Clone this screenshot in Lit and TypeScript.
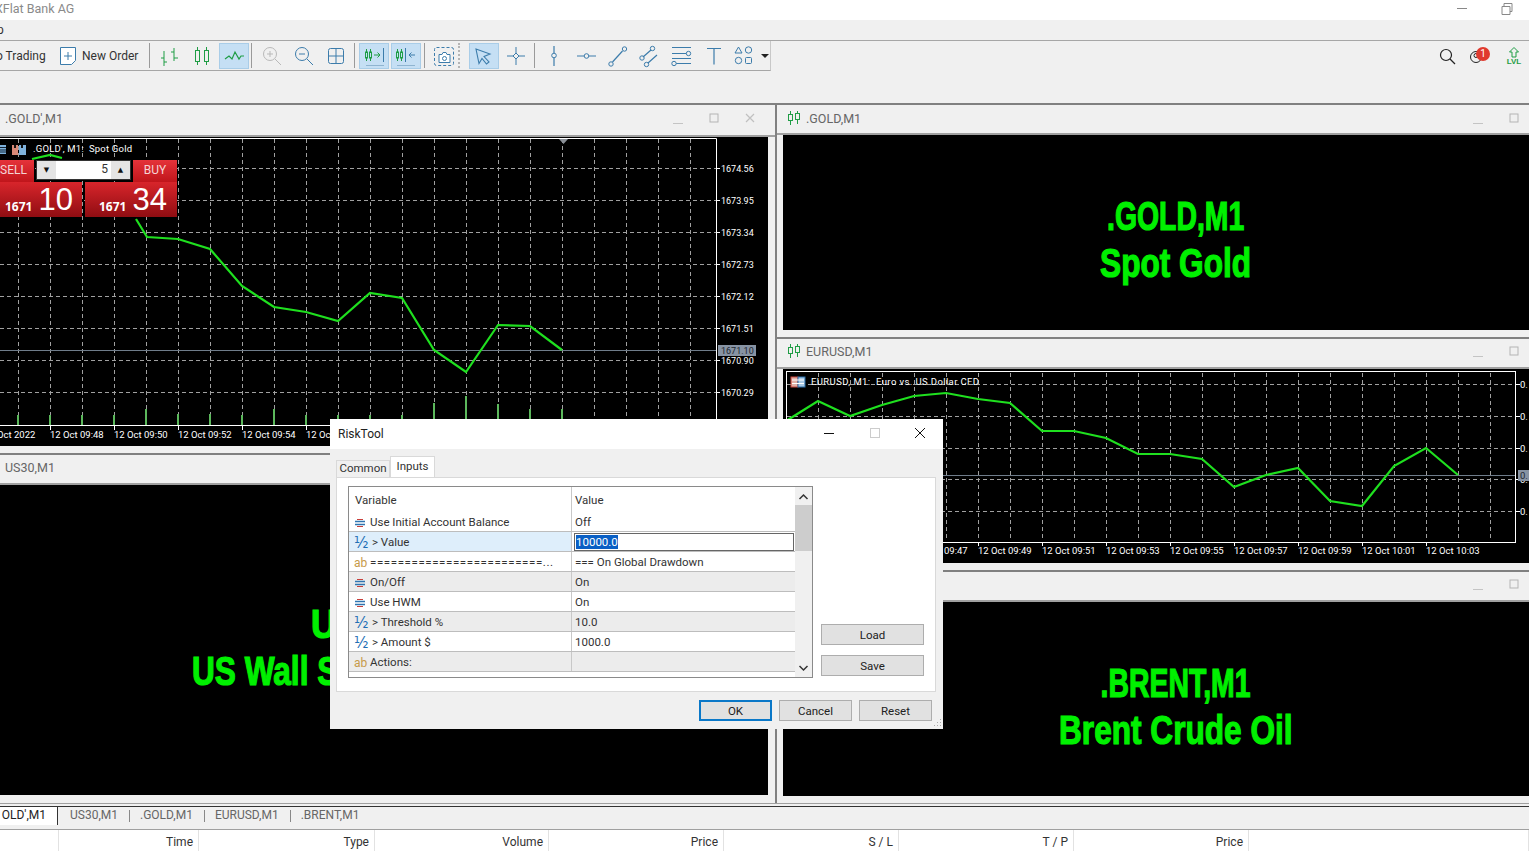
import { LitElement, html, css, svg } from 'lit'
import { customElement } from 'lit/decorators.js'

const range = (from: number, step: number, to: number) => {
  const out: number[] = []
  for (let v = from; v <= to; v += step) out.push(v)
  return out
}
const pts = (list: number[][]) => list.map((p) => p.join(',')).join(' ')

// toolbar glyphs, all on a 30x26 box
const G = '#1f9d45'
const B = '#3c7cab'
const icons: Record<string, unknown> = {
  bars: svg`<path d="M9 8v15M6 15h3M9 19h3M19 5v13M16 9h3M19 15h4" stroke="${G}" fill="none"/>`,
  candles: svg`<path d="M10.5 4v3M10.5 18v4M19.5 4v3M19.5 18v4" stroke="${G}"/><rect x="8.5" y="7.5" width="4" height="11" fill="none" stroke="${G}"/><rect x="17.5" y="7.5" width="4" height="11" fill="none" stroke="${G}"/>`,
  line: svg`<path d="M6 16l4-3 3 3 3-7 4 7 2-3h3" stroke="${G}" fill="none" stroke-width="1.2"/>`,
  zoomin: svg`<circle cx="13" cy="11" r="6.5" fill="none" stroke="#b9b9b9"/><path d="M10 11h6M13 8v6M18 16l6 6" stroke="#b9b9b9" fill="none"/>`,
  zoomout: svg`<circle cx="13" cy="11" r="6.5" fill="none" stroke="${B}"/><path d="M10 11h6M18 16l6 6" stroke="${B}" fill="none"/>`,
  tile: svg`<rect x="7.5" y="5.5" width="15" height="15" rx="2" fill="none" stroke="${B}"/><path d="M15 5.5v15M7.5 13h15" stroke="${B}"/>`,
  shift: svg`<path d="M7.5 6v12M11.5 6v12" stroke="${G}"/><rect x="6.5" y="9" width="2" height="6" fill="#c5dff4" stroke="${G}"/><rect x="10.5" y="9" width="2" height="6" fill="#c5dff4" stroke="${G}"/><path d="M15 12h6M18.500 9.500L21 12l-2.500 2.500" stroke="${G}" fill="none"/><path d="M24.500 5v14" stroke="${B}"/><path d="M7 22.500h18" stroke="#8fb4d0"/>`,
  auto: svg`<path d="M6.500 6v12M10.500 6v12" stroke="${G}"/><rect x="5.500" y="9" width="2" height="6" fill="#c5dff4" stroke="${G}"/><rect x="9.500" y="9" width="2" height="6" fill="#c5dff4" stroke="${G}"/><path d="M14.500 5v14" stroke="${B}"/><path d="M24 12h-6M20.500 9.500L18 12l2.500 2.500" stroke="${B}" fill="none"/><path d="M6 22.500h18" stroke="#8fb4d0"/>`,
  camera: svg`<rect x="5.5" y="4.5" width="19" height="18" rx="2" fill="none" stroke="${B}" stroke-dasharray="3 2"/><path d="M10 11.5h3l1-2h3l1 2h3v8H10z" fill="#fff" stroke="${B}"/><circle cx="15.5" cy="15.5" r="2" fill="none" stroke="${B}"/>`,
  cursor: svg`<path d="M7 6l14 5-6 2.5 5 5.5-2.500 2-4.500-5.500-3 5z" fill="none" stroke="${B}" stroke-width="1.1"/>`,
  cross: svg`<path d="M15 4v18M6 13h18" stroke="${B}"/><path d="M15 10l3 3-3 3-3-3z" fill="#f0f0f0" stroke="${B}"/>`,
  vline: svg`<path d="M15 3v7M15 15v8" stroke="${B}" stroke-width="1.2"/><circle cx="15" cy="12.5" r="2.3" fill="none" stroke="${B}"/>`,
  hline: svg`<path d="M6 13h7M18 13h7" stroke="${B}" stroke-width="1.2"/><circle cx="15.5" cy="13" r="2.3" fill="none" stroke="${B}"/>`,
  trend: svg`<path d="M9.5 19l10-11" stroke="${B}" stroke-width="1.2"/><circle cx="8" cy="21" r="2.2" fill="none" stroke="${B}"/><circle cx="21.500" cy="6" r="2.200" fill="none" stroke="${B}"/>`,
  channel: svg`<path d="M8 14l8-7M13 20l9-8" stroke="${B}" stroke-width="1.2"/><circle cx="7" cy="15" r="2.200" fill="none" stroke="${B}"/><circle cx="17.500" cy="5.500" r="2.200" fill="none" stroke="${B}"/><circle cx="11.500" cy="21.500" r="2.200" fill="none" stroke="${B}"/>`,
  fibo: svg`<path d="M5 4.500h19M5 10.500h16M8 20.500h16M5 15.500h19" stroke="${B}" stroke-width="1.200"/><circle cx="21.500" cy="10.500" r="2.200" fill="#f0f0f0" stroke="${B}"/><circle cx="7" cy="20.500" r="2.200" fill="#f0f0f0" stroke="${B}"/>`,
  text: svg`<path d="M8 5.500h14M15 5.500v16" stroke="${B}" stroke-width="1.200"/>`,
  shapes: svg`<path d="M7.500 4l3.500 6H4z" fill="none" stroke="${B}"/><circle cx="17.500" cy="7" r="3.200" fill="none" stroke="${B}"/><circle cx="7.500" cy="17.500" r="3.200" fill="none" stroke="${B}"/><rect x="14.500" y="14.500" width="6" height="6" rx="1" fill="none" stroke="${B}"/>`,
}

type Tool = { icon: string; on?: boolean } | { sep: string }
const tools: Tool[] = [
  { icon: 'bars' }, { icon: 'candles' }, { icon: 'line', on: true }, { sep: 'a' },
  { icon: 'zoomin' }, { icon: 'zoomout' }, { icon: 'tile' }, { sep: 'b' },
  { icon: 'shift', on: true }, { icon: 'auto', on: true }, { sep: 'b' },
  { icon: 'camera' }, { sep: 'dots' },
  { icon: 'cursor', on: true }, { icon: 'cross' }, { sep: 'b' },
  { icon: 'vline' }, { icon: 'hline' }, { icon: 'trend' }, { icon: 'channel' },
  { icon: 'fibo' }, { icon: 'text' }, { icon: 'shapes' },
]

const enumIcon = html`<svg class="ico" viewBox="0 0 12 12"><path d="M1 4.500h10M1 7.500h10" stroke="#2f74b0" stroke-width="1.300" fill="none"/><path d="M3 2.500h6M3 9.500h6" stroke="#c8403c" stroke-width="1.200"/></svg>`
const numIcon = html`<span class="ico half">½</span>`
const strIcon = html`<span class="ico ab">ab</span>`

const rows = [
  { kind: enumIcon, name: 'Use Initial Account Balance', value: 'Off', cls: '' },
  { kind: numIcon, name: '> Value', value: '', cls: 'sel' },
  { kind: strIcon, name: '=========================...', value: '=== On Global Drawdown', cls: 'eq' },
  { kind: enumIcon, name: 'On/Off', value: 'On', cls: 'alt' },
  { kind: enumIcon, name: 'Use HWM', value: 'On', cls: '' },
  { kind: numIcon, name: '> Threshold %', value: '10.0', cls: 'alt' },
  { kind: numIcon, name: '> Amount $', value: '1000.0', cls: '' },
  { kind: strIcon, name: 'Actions:', value: '', cls: 'alt' },
]

const goldLine = [[136, 218], [147, 236], [178, 238], [210, 248], [242, 285], [274, 306], [306, 311], [338, 320], [370, 292], [402, 297], [434, 349], [466, 371], [498, 324], [530, 325], [562, 349]]
const goldPrices = ['1674.56', '1673.95', '1673.34', '1672.73', '1672.12', '1671.51', '1670.90', '1670.29']
const goldTimes: [number, string][] = [[-16, '12 Oct 2022'], [50, '12 Oct 09:48'], [114, '12 Oct 09:50'], [178, '12 Oct 09:52'], [242, '12 Oct 09:54'], [306, '12 Oct 09:56']]
const goldVols: [number, number][] = [[18, 10], [50, 10], [82, 10], [114, 10], [146, 16], [178, 11], [210, 11], [242, 10], [274, 16], [306, 10], [338, 10], [370, 10], [402, 10], [434, 22], [466, 29], [498, 21], [530, 16], [562, 16]]

const eurLine = [[786, 420], [818, 400], [850, 415], [882, 404], [914, 395], [946, 392], [978, 398], [1010, 402], [1042, 430], [1074, 430], [1106, 437], [1138, 453], [1170, 453], [1202, 458], [1234, 486], [1266, 474], [1298, 467], [1330, 500], [1362, 505], [1394, 465], [1426, 447], [1458, 474]]
const eurTimes: [number, string][] = [[914, '12 Oct 09:47'], [978, '12 Oct 09:49'], [1042, '12 Oct 09:51'], [1106, '12 Oct 09:53'], [1170, '12 Oct 09:55'], [1234, '12 Oct 09:57'], [1298, '12 Oct 09:59'], [1362, '12 Oct 10:01'], [1426, '12 Oct 10:03']]
const eurY = [383, 415, 447, 478, 510]

const goldChart = svg`
  <svg class="chart" viewBox="0 136 768 309" width="768" height="309">
    ${range(18, 32, 700).map((x) => svg`<path class="grid" d="M${x + 0.5} 138V424"/>`)}
    ${range(167, 32, 392).map((y) => svg`<path class="grid" d="M0 ${y + 0.5}H716"/>`)}
    <path class="bid" d="M0 349.500H716"/>
    <polyline class="price" points="${pts([[32, 158], [50, 154], [62, 157]])}"/>
    <polyline class="price" points="${pts(goldLine)}"/>
    ${goldVols.map(([x, h]) => svg`<path class="vol" d="M${x} 424V${424 - h}"/>`)}
    <path class="frame" d="M0 137.500H716.500V424.500H0"/>
    <path d="M559 138h9l-4.500 5z" fill="#8a8f96"/>
    ${goldPrices.map((p, i) => svg`<path class="frame" d="M716 ${167.5 + i * 32}h4"/><text class="lbl px" x="721" y="${170.5 + i * 32}">${p}</text>`)}
    ${goldTimes.map(([x, t]) => svg`<path class="frame" d="M${x + 0.5} 424v5"/><text class="lbl" x="${x}" y="437">${t}</text>`)}
    <rect x="718" y="344" width="38" height="11" fill="#8793a3"/>
    <text class="lbl px dark" x="721" y="353">1671.10</text>
    <path d="M0 144h6v9H0z" fill="#7fb2dc"/><path d="M0 146.500h6M0 149h6M0 151h6" stroke="#123"/>
    <path d="M12 144h6v10h-6z" fill="#d98a78"/><path d="M19 144h7v10h-7z" fill="#7fb2dc"/><path d="M14 144h2v3h-2zM21 144h2v3h-2z" fill="#111"/>
    <text class="lbl" x="33" y="151" textLength="99">.GOLD', M1:  Spot Gold</text>
  </svg>`

const eurChart = svg`
  <svg class="chart" viewBox="783 368 746 194" width="746" height="194">
    ${range(818, 32, 1490).map((x) => svg`<path class="grid" d="M${x + 0.5} 372V540"/>`)}
    ${eurY.map((y) => svg`<path class="grid" d="M787 ${y + 0.5}H1515"/>`)}
    <path class="bid" d="M787 474.500H1515"/>
    <polyline class="price" points="${pts(eurLine)}"/>
    <rect class="frame" x="786.500" y="370.500" width="729" height="171"/>
    ${eurY.map((y) => svg`<path class="frame" d="M1516 ${y + 0.5}h4"/><text class="lbl" x="1520" y="${y + 3.5}">0.</text>`)}
    ${eurTimes.map(([x, t]) => svg`<path class="frame" d="M${x + 0.5} 541v4"/><text class="lbl" x="${x}" y="553">${t}</text>`)}
    <rect x="1518" y="469" width="11" height="11" fill="#8793a3"/>
    <text class="lbl dark" x="1520" y="478">0.</text>
    <rect x="791" y="376" width="7" height="10" fill="#e2b0a6" stroke="#c8463c"/>
    <rect x="798" y="376" width="7" height="10" fill="#a8c8e4" stroke="#2a6ea8"/>
    <path d="M792 379h12M792 382.500h12" stroke="#fff"/>
    <text class="lbl" x="811" y="384" textLength="168">EURUSD, M1:  Euro vs. US Dollar CFD</text>
  </svg>`

@customElement('app-root')
export class AppRoot extends LitElement {
  static styles = css`
    :host {
      display: block;
      position: relative;
      width: 1529px;
      height: 851px;
      overflow: hidden;
      background: #f0f0f0;
      font: 12px Roboto, sans-serif;
      color: #333;
    }
    .title {
      height: 20px;
      box-sizing: border-box;
      padding-bottom: 3px;
      background: #fff;
      display: flex;
      align-items: center;
      color: #8a8a8a;
      font-size: 12.5px;
    }
    .title span {
      margin-left: -5px;
      flex: 1;
    }
    .title svg {
      margin-right: 14px;
    }
    .title svg.min {
      margin-right: 29px;
    }
    .menu {
      height: 20px;
      line-height: 20px;
      margin-left: -3px;
    }
    .barwrap {
      display: flex;
      justify-content: space-between;
      height: 62px;
      border-top: 1px solid #a6a6a6;
    }
    .toolbar {
      width: 771px;
      height: 30px;
      box-sizing: border-box;
      border-bottom: 1px solid #a6a6a6;
      border-right: 1px solid #c8c8c8;
      display: flex;
      align-items: center;
    }
    .tbtext {
      font-size: 12px;
      white-space: nowrap;
    }
    .auto {
      width: 62px;
      margin-left: -4px;
    }
    .neworder {
      width: 20px;
      height: 20px;
      margin-right: 4px;
    }
    .order {
      width: 66px;
    }
    .btn {
      width: 30px;
      height: 26px;
      margin: 0 1px;
      box-sizing: border-box;
      flex: none;
    }
    .btn.on {
      background: #c5dff4;
      outline: 1px solid #a9cde8;
      outline-offset: -1px;
    }
    .btn svg {
      display: block;
    }
    .sep {
      width: 1px;
      height: 25px;
      background: #9a9a9a;
      flex: none;
      margin: 0 3px 0 2px;
    }
    .sep.a {
      margin: 0 4px 0 1px;
    }
    .sep.dots {
      margin: 0 8px 0 -2px;
      background: none;
      border-left: 2px dotted #b5b5b5;
      width: 0;
    }
    .caret {
      width: 0;
      height: 0;
      border: 4px solid transparent;
      border-top-color: #222;
      border-bottom: 0;
      margin-left: -1px;
    }
    .status {
      display: flex;
      align-items: center;
      height: 30px;
    }
    .status > svg {
      margin-right: 10px;
    }
    .bell {
      position: relative;
      width: 32px;
      height: 24px;
    }
    .badge {
      position: absolute;
      left: 9px;
      top: 3px;
      width: 14px;
      height: 14px;
      border-radius: 50%;
      background: #e03a2e;
      color: #fff;
      font-size: 10px;
      line-height: 14px;
      text-align: center;
    }
    .lvl {
      width: 30px;
      text-align: center;
      color: #1f9d45;
      font: bold 8px/8px 'Liberation Sans', sans-serif;
    }
    .lvl svg {
      display: block;
      margin: 0 auto;
    }
    .mdi {
      height: 700px;
      display: flex;
    }
    .col {
      display: flex;
      flex-direction: column;
    }
    .col.left {
      width: 775px;
      border-right: 2px solid #808080;
    }
    .col.right {
      flex: 1;
      min-width: 0;
    }
    .win {
      border-top: 2px solid #808080;
      padding-bottom: 7px;
      display: flex;
      flex-direction: column;
    }
    .win:last-child {
      padding-bottom: 8px;
    }
    .head {
      height: 28px;
      box-sizing: content-box;
      flex: none;
      display: flex;
      align-items: center;
      gap: 5px;
      color: #666;
      font-size: 12.5px;
      border-bottom: 2px solid #a0a0a0;
    }
    .head > * {
      position: relative;
      top: -1px;
    }
    .head.tall > *, .win + .win .head > * {
      top: -2px;
    }
    .left .head {
      padding-left: 5px;
    }
    .right .head {
      padding-left: 10px;
    }
    .head.tall {
      height: 30px;
    }
    .head b {
      font-weight: normal;
      flex: 1;
    }
    .ctl {
      display: flex;
      margin-right: 5px;
      gap: 16px;
    }
    .left .ctl {
      margin-right: 15px;
    }
    .body {
      position: relative;
      background: #000;
      overflow: hidden;
      flex: none;
    }
    .left .body {
      margin-right: 7px;
    }
    .right .body {
      margin-left: 6px;
    }
    .h309 { height: 309px; }
    .h310 { height: 310px; }
    .h195 { height: 195px; }
    .h194 { height: 194px; }
    .chart {
      display: block;
    }
    .grid {
      stroke: #a0a0a0;
      stroke-dasharray: 4 3;
      fill: none;
    }
    .frame {
      stroke: #fff;
      fill: none;
    }
    .bid {
      stroke: #6f7c8a;
      fill: none;
    }
    .price {
      stroke: #1fe01f;
      stroke-width: 2.200;
      fill: none;
    }
    .vol {
      stroke: #5cb85c;
      stroke-width: 2;
    }
    .lbl {
      fill: #fff;
      font: 9.500px Roboto, sans-serif;
      white-space: pre;
    }
    .lbl.px {
      font-size: 9px;
    }
    .lbl.dark {
      fill: #1c2630;
    }
    .big {
      height: 100%;
      box-sizing: border-box;
      padding-top: 15px;
      display: flex;
      flex-direction: column;
      align-items: center;
      justify-content: center;
      color: #00f000;
      font: bold 40px/47px 'Liberation Sans', sans-serif;
      -webkit-text-stroke: 1.200px #00f000;
      white-space: nowrap;
    }
    .right .big {
      padding-left: 40px;
    }
    .big span {
      transform: scaleX(0.79);
    }
    .big span.sym {
      transform: scaleX(0.71);
    }
    .big span.sym.us {
      transform: scaleX(0.88);
    }
    .trade {
      position: absolute;
      left: 0;
      top: 23px;
      width: 177px;
      color: #fff;
    }
    .trow {
      display: flex;
    }
    .sell, .buy {
      height: 22px;
      background: linear-gradient(#e5333a, #c0151b);
      text-align: center;
      line-height: 20px;
      font-size: 12px;
      color: #f5d5d5;
    }
    .sell {
      width: 34px;
      text-align: left;
    }
    .buy {
      width: 44px;
      margin-left: auto;
    }
    .spin {
      width: 95px;
      height: 20px;
      margin-left: 2px;
      background: #fff;
      border: 1px solid #333;
      box-sizing: border-box;
      display: flex;
      color: #333;
      font-size: 12px;
      line-height: 17px;
    }
    .spin i {
      width: 19px;
      background: #e4e4e4;
      font: 7px/18px 'DejaVu Sans', sans-serif;
      text-align: center;
      color: #111;
    }
    .spin span {
      flex: 1;
      text-align: right;
      padding-right: 3px;
    }
    .quote {
      height: 35px;
      background: linear-gradient(#d8252b, #8f0d12);
      display: flex;
      align-items: center;
      box-sizing: border-box;
      font: 31px/33px 'Liberation Sans', sans-serif;
    }
    .quote small {
      font: bold 12px 'Noto Sans', sans-serif;
      margin: 13px 6px 0 0;
    }
    .q1 {
      width: 82px;
      padding-left: 5px;
    }
    .q2 {
      width: 92px;
      margin-left: 3px;
      padding-left: 14px;
    }
    .foot {
      height: 49px;
    }
    .footline {
      height: 1px;
      background: #a0a0a0;
      margin-bottom: 2px;
    }
    .tabs {
      height: 24px;
      box-sizing: border-box;
      display: flex;
      align-items: flex-start;
      border-bottom: 1px solid #a0a0a0;
      color: #666;
      font-size: 12px;
    }
    .tab {
      height: 19px;
      line-height: 17px;
      box-sizing: border-box;
      padding: 0 11px;
      border-top: 1px solid #333;
      position: relative;
    }
    .tab + .tab::before {
      content: '';
      position: absolute;
      left: 0;
      top: 3px;
      height: 12px;
      border-left: 1px solid #888;
    }
    .tab.first {
      padding-left: 12px;
    }
    .tab.first::before {
      display: none;
    }
    .tab.last {
      flex: 1;
    }
    .tab.cur {
      width: 58px;
      flex: none;
      background: #fff;
      color: #222;
      border-right: 1px solid #333;
      text-align: right;
      padding: 0 11px 0 0;
    }
    .cols {
      height: 22px;
      background: #fff;
      display: grid;
      grid-template-columns: 59px 140px 176px 174px 175px 175px 175px 175px 1fr;
      line-height: 24px;
      font-size: 12px;
    }
    .cols div {
      border-right: 1px solid #e2e2e2;
      text-align: right;
      padding-right: 5px;
    }
    .dlg {
      position: absolute;
      left: 330px;
      top: 419px;
      width: 613px;
      height: 310px;
      background: #f0f0f0;
      color: #333;
      font-size: 11.500px;
    }
    .dtitle {
      height: 30px;
      box-sizing: border-box;
      padding: 0 0 1px 8px;
      background: #fff;
      display: flex;
      align-items: center;
      font-size: 12px;
      color: #222;
    }
    .dtitle span {
      flex: 1;
    }
    .dtitle svg {
      display: block;
      margin: 0 16px 2px 0;
    }
    .dtitle svg.mx {
      margin-right: 20px;
    }
    .dtitle svg.cl {
      margin-right: 13px;
    }
    .dtabs {
      height: 28px;
      box-sizing: border-box;
      padding-left: 6px;
      display: flex;
      align-items: flex-end;
    }
    .dtab {
      height: 17px;
      line-height: 15px;
      width: 54px;
      text-align: center;
      box-sizing: border-box;
      background: #f0f0f0;
      border: 1px solid #d9d9d9;
      border-bottom: 0;
    }
    .dtab.cur {
      width: 45px;
      background: #fff;
      line-height: 18px;
      height: 21px;
    }
    .pane {
      margin: 0 7px 0 6px;
      height: 215px;
      box-sizing: border-box;
      background: #fff;
      border: 1px solid #d9d9d9;
      padding: 8px 11px 15px;
      display: flex;
      gap: 8px;
    }
    .table {
      width: 465px;
      height: 192px;
      box-sizing: border-box;
      border: 1px solid #8a8a8a;
      display: flex;
      overflow: hidden;
      flex: none;
    }
    .tbody {
      width: 446px;
      flex: none;
    }
    .row {
      height: 20px;
      box-sizing: border-box;
      display: flex;
      border-bottom: 1px solid #bdbdbd;
      line-height: 21px;
      white-space: nowrap;
    }
    .row.hd {
      height: 25px;
      border: 0;
      line-height: 27px;
    }
    .row.alt {
      background: #ececec;
    }
    .row.eq .c1 span:last-child {
      letter-spacing: 0.6px;
    }
    .c1 {
      width: 222px;
      padding: 2px 0 0 5px;
      box-sizing: border-box;
      display: flex;
      align-items: center;
      gap: 4px;
      flex: none;
      overflow: hidden;
    }
    .c2 {
      flex: 1;
      border-left: 1px solid #c8c8c8;
      padding-left: 3px;
    }
    .row.hd .c1 {
      padding-left: 6px;
    }
    .row.sel .c1 {
      background: #deeefb;
    }
    .row.sel .c2 {
      padding: 1px 1px 0 2px;
    }
    .input {
      height: 18px;
      box-sizing: border-box;
      border: 1px solid #666;
      line-height: 16px;
      padding-left: 1px;
    }
    .input span {
      background: #0a5fc4;
      color: #fff;
    }
    .ico {
      width: 12px;
      height: 12px;
      flex: none;
      display: block;
    }
    .half {
      color: #1f6fb5;
      font: 15px/12px 'DejaVu Sans', sans-serif;
      width: 13px;
      margin-right: 1px;
    }
    .ab {
      color: #c79a4a;
      font-size: 12px;
      line-height: 12px;
    }
    .sbar {
      flex: 1;
      background: #f0f0f0;
      position: relative;
    }
    .thumb {
      margin-top: 18px;
      height: 46px;
      background: #cdcdcd;
    }
    .arrow {
      position: absolute;
      left: 3px;
    }
    .arrow.up {
      top: 6px;
    }
    .arrow.down {
      bottom: 5px;
    }
    .side {
      width: 103px;
      display: flex;
      flex-direction: column;
      justify-content: flex-end;
      gap: 10px;
    }
    .dbtn {
      height: 21px;
      line-height: 20px;
      box-sizing: border-box;
      background: #e1e1e1;
      border: 1px solid #adadad;
      text-align: center;
      color: #222;
    }
    .dfoot {
      display: flex;
      justify-content: flex-end;
      gap: 7px;
      padding: 8px 11px 0 0;
    }
    .dfoot .dbtn {
      width: 73px;
    }
    .dbtn.def {
      border: 2px solid #0a78c8;
      line-height: 18px;
    }
    .grip {
      position: absolute;
      right: 1px;
      bottom: 1px;
    }
  `

  private tool(t: Tool) {
    if ('sep' in t) return html`<div class="sep ${t.sep}"></div>`
    return html`<div class="btn ${t.on ? 'on' : ''}"><svg width="30" height="26" viewBox="0 0 30 26">${icons[t.icon]}</svg></div>`
  }

  private controls(close: boolean) {
    return html`<div class="ctl">
      <svg width="20" height="14" viewBox="0 0 20 14"><path d="M5 12.500h10" stroke="#c4c4c4"/></svg>
      <svg width="20" height="14" viewBox="0 0 20 14"><rect x="6" y="3" width="8" height="8" fill="none" stroke="#b4b4b4"/></svg>
      ${close ? html`<svg width="20" height="14" viewBox="0 0 20 14"><path d="M6 3l8 8M14 3l-8 8" stroke="#c0c0c0" fill="none" stroke-width="1.200"/></svg>` : null}
    </div>`
  }

  private candle() {
    return html`<svg width="14" height="14" viewBox="0 0 14 14"><path d="M3.500 0v3M3.500 10v4M10.500 0v2M10.500 9v4" stroke="#1f9d45"/><rect x="1.500" y="3.500" width="4" height="6" fill="none" stroke="#1f9d45"/><rect x="8.500" y="2.500" width="4" height="6" fill="none" stroke="#1f9d45"/></svg>`
  }

  render() {
    return html`
      <div class="title">
        <span>XFlat Bank AG</span>
        <svg class="min" width="16" height="14" viewBox="0 0 16 14"><path d="M3 6.500h10" stroke="#888"/></svg>
        <svg width="16" height="14" viewBox="0 0 16 14"><path d="M3 4.500h8v8H3zM5 4.500v-3h8v8h-2" fill="none" stroke="#888"/></svg>
      </div>
      <div class="menu">p</div>
      <div class="barwrap">
        <div class="toolbar">
          <span class="tbtext auto">o Trading</span>
          <svg class="neworder" viewBox="0 0 20 20"><path d="M2.500 1.500h15v13l-4 4h-11z" fill="#fff" stroke="#3c7cab"/><path d="M10 6v8M6 10h8" stroke="#3c7cab"/></svg>
          <span class="tbtext order">New Order</span>
          <div class="sep a"></div>
          ${tools.map((t) => this.tool(t))}
          <div class="caret"></div>
        </div>
        <div class="status">
          <svg width="20" height="20" viewBox="0 0 20 20"><circle cx="9" cy="9" r="5.500" fill="none" stroke="#222" stroke-width="1.200"/><path d="M13 13l5 5" stroke="#222" stroke-width="1.200"/></svg>
          <div class="bell">
            <svg width="20" height="24" viewBox="0 0 20 24"><circle cx="9" cy="13" r="5.500" fill="none" stroke="#222"/><circle cx="9" cy="11.500" r="2" fill="none" stroke="#222"/></svg>
            <span class="badge">1</span>
          </div>
          <div class="lvl">
            <svg width="12" height="11" viewBox="0 0 12 11"><path d="M6 .5l4.500 4.500H8v5H4V5H1.500z" fill="none" stroke="#1f9d45"/></svg>
            LVL
          </div>
        </div>
      </div>
      <div class="mdi">
        <div class="col left">
          <div class="win">
            <div class="head tall"><b>.GOLD',M1</b>${this.controls(true)}</div>
            <div class="body h309">
              ${goldChart}
              <div class="trade">
                <div class="trow">
                  <div class="sell">SELL</div>
                  <div class="spin"><i>▼</i><span>5</span><i>▲</i></div>
                  <div class="buy">BUY</div>
                </div>
                <div class="trow">
                  <div class="quote q1"><small>1671</small>10</div>
                  <div class="quote q2"><small>1671</small>34</div>
                </div>
              </div>
            </div>
          </div>
          <div class="win">
            <div class="head"><b>US30,M1</b></div>
            <div class="body h310"><div class="big"><span class="sym us">US30,M1</span><span>US Wall Street 30 Futures</span></div></div>
          </div>
        </div>
        <div class="col right">
          <div class="win">
            <div class="head">${this.candle()}<b>.GOLD,M1</b>${this.controls(false)}</div>
            <div class="body h195"><div class="big"><span class="sym">.GOLD,M1</span><span>Spot Gold</span></div></div>
          </div>
          <div class="win">
            <div class="head">${this.candle()}<b>EURUSD,M1</b>${this.controls(false)}</div>
            <div class="body h194">${eurChart}</div>
          </div>
          <div class="win">
            <div class="head">${this.candle()}<b>.BRENT,M1</b>${this.controls(false)}</div>
            <div class="body h194"><div class="big"><span class="sym">.BRENT,M1</span><span>Brent Crude Oil</span></div></div>
          </div>
        </div>
      </div>
      <div class="foot">
        <div class="footline"></div>
        <div class="tabs">
          <div class="tab cur">OLD',M1</div>
          <div class="tab first">US30,M1</div>
          <div class="tab">.GOLD,M1</div>
          <div class="tab">EURUSD,M1</div>
          <div class="tab last">.BRENT,M1</div>
        </div>
        <div class="cols">
          <div></div><div>Time</div><div>Type</div><div>Volume</div><div>Price</div><div>S / L</div><div>T / P</div><div>Price</div><div></div>
        </div>
      </div>
      <div class="dlg">
        <div class="dtitle">
          <span>RiskTool</span>
          <svg width="30" height="14" viewBox="0 0 30 14"><path d="M10 7.500h10" stroke="#111"/></svg>
          <svg class="mx" width="30" height="14" viewBox="0 0 30 14"><rect x="10.500" y="2.500" width="9" height="9" fill="none" stroke="#ccc"/></svg>
          <svg class="cl" width="20" height="14" viewBox="0 0 20 14"><path d="M5 2l10 10M15 2L5 12" stroke="#111" fill="none"/></svg>
        </div>
        <div class="dtabs">
          <div class="dtab">Common</div>
          <div class="dtab cur">Inputs</div>
        </div>
        <div class="pane">
          <div class="table">
            <div class="tbody">
              <div class="row hd"><div class="c1">Variable</div><div class="c2">Value</div></div>
              ${rows.map((r) => html`
                <div class="row ${r.cls}">
                  <div class="c1">${r.kind}<span>${r.name}</span></div>
                  <div class="c2">${r.cls === 'sel' ? html`<div class="input"><span>10000.0</span></div>` : r.value}</div>
                </div>`)}
            </div>
            <div class="sbar">
              <div class="thumb"></div>
              <svg class="arrow up" width="11" height="8" viewBox="0 0 11 8"><path d="M1.500 6l4-4 4 4" fill="none" stroke="#333" stroke-width="1.500"/></svg>
              <svg class="arrow down" width="11" height="8" viewBox="0 0 11 8"><path d="M1.500 2l4 4 4-4" fill="none" stroke="#333" stroke-width="1.500"/></svg>
            </div>
          </div>
          <div class="side">
            <div class="dbtn">Load</div>
            <div class="dbtn">Save</div>
          </div>
        </div>
        <div class="dfoot">
          <div class="dbtn def">OK</div>
          <div class="dbtn">Cancel</div>
          <div class="dbtn">Reset</div>
        </div>
        <svg class="grip" width="10" height="10" viewBox="0 0 10 10"><path d="M8 1h1v1H8zM5 4h1v1H5zM8 4h1v1H8zM2 7h1v1H2zM5 7h1v1H5zM8 7h1v1H8z" fill="#aaa"/></svg>
      </div>
    `
  }
}
